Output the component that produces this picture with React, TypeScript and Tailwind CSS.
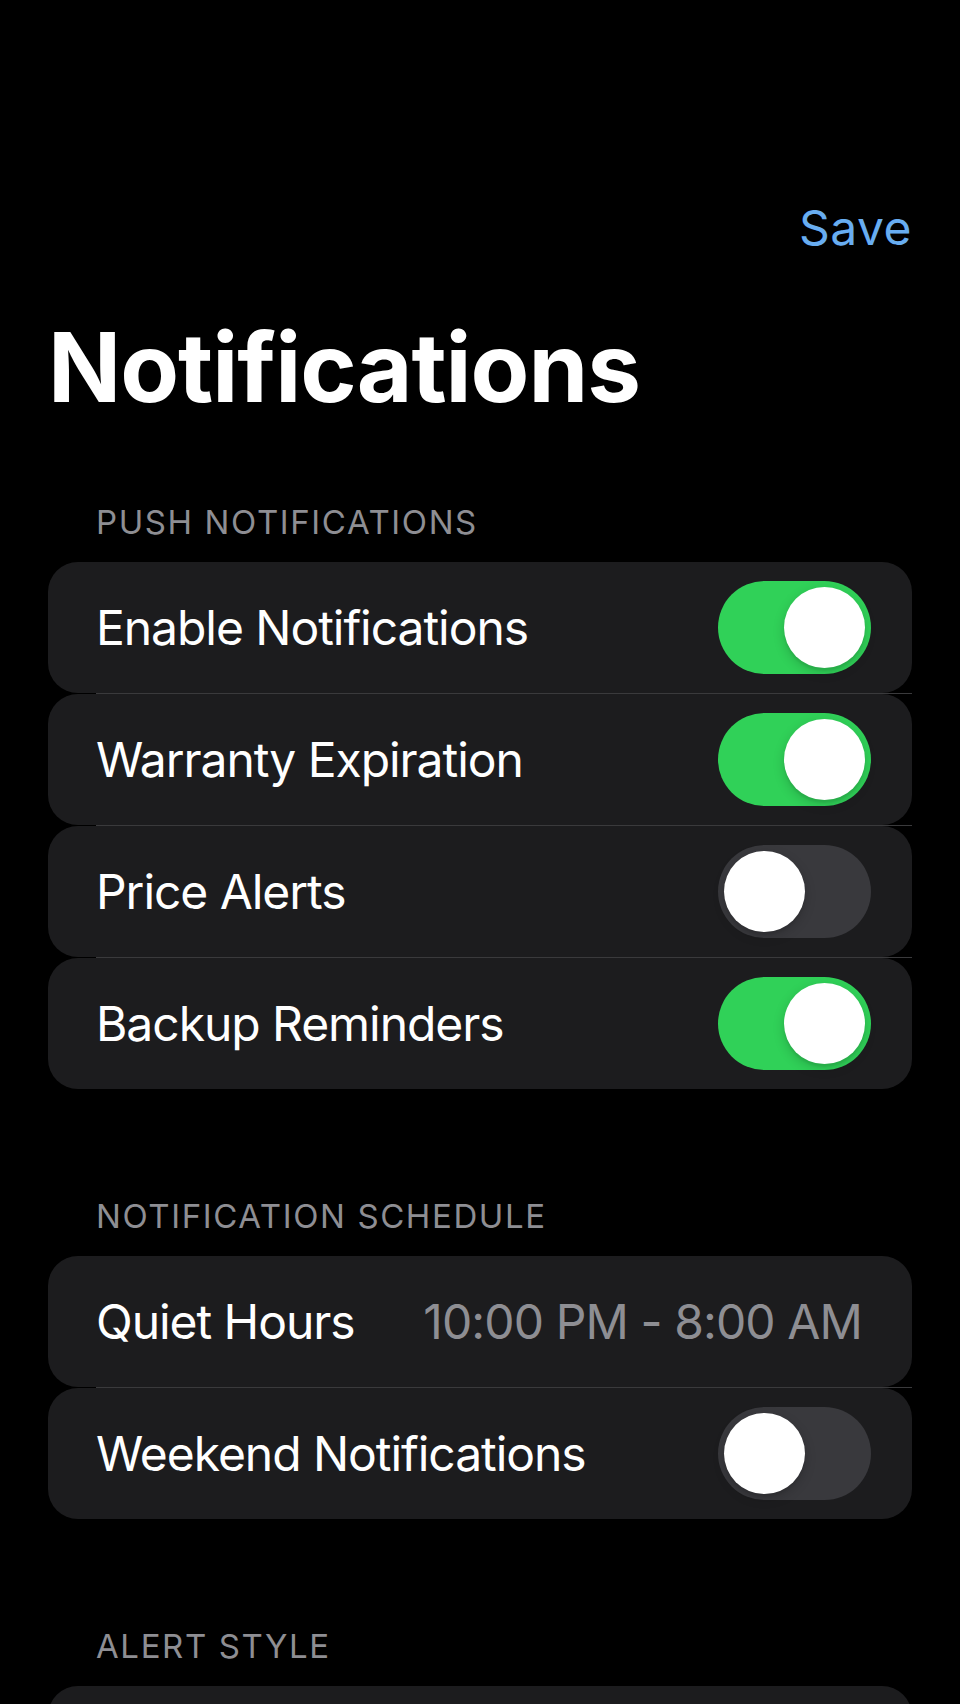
import React from "react";

function Toggle({ on }: { on: boolean }) {
  return (
    <div
      className={
        "relative h-[93px] w-[153px] shrink-0 rounded-full " +
        (on ? "bg-[#30d158]" : "bg-[#39393d]")
      }
    >
      <div
        className={
          "absolute top-[6px] h-[81px] w-[81px] rounded-full bg-white shadow-[0_4px_12px_rgba(0,0,0,0.18),0_3px_2px_rgba(0,0,0,0.06)] " +
          (on ? "right-[6px]" : "left-[6px]")
        }
      />
    </div>
  );
}

type Row = { label: string; toggle?: boolean; value?: string };

function Group({ rows }: { rows: Row[] }) {
  return (
    <div className="flex flex-col">
      {rows.map((r, i) => (
        <div key={r.label} className="flex flex-col">
          <div
            className={
              "flex h-[131px] items-center justify-between rounded-[30px] bg-[#1c1c1e] pl-[48px] " +
              (r.value !== undefined ? "pr-[50px]" : "pr-[41px]")
            }
          >
            <span className="text-[48px] leading-[58px] tracking-[-1.05px] text-white">
              {r.label}
            </span>
            {r.value !== undefined ? (
              <span className="text-[48px] leading-[58px] tracking-[-0.9px] text-[#8e8e93]">
                {r.value}
              </span>
            ) : (
              <Toggle on={!!r.toggle} />
            )}
          </div>
          {i < rows.length - 1 && <div className="ml-[48px] h-px bg-[#3a3a3c]" />}
        </div>
      ))}
    </div>
  );
}

function Header({ children }: { children: React.ReactNode }) {
  return (
    <div className="mb-[20px] pl-[48px] text-[33px] leading-[40px] tracking-[1.6px] text-[#8e8e93]">
      {children}
    </div>
  );
}

export default function App() {
  return (
    <div className="h-[1704px] w-[960px] overflow-hidden bg-black font-['Inter',sans-serif] antialiased">
      <div className="flex flex-col px-[48px]">
        <div className="flex justify-end pt-[200px]">
          <span className="text-[48px] leading-[56px] tracking-[0.5px] text-[#68adf1]">Save</span>
        </div>
        <h1 className="mt-[53px] text-[96px] font-bold leading-[116px] tracking-[-1px] text-white">
          Notifications
        </h1>

        <div className="mt-[77px]">
          <Header>PUSH NOTIFICATIONS</Header>
          <Group
            rows={[
              { label: "Enable Notifications", toggle: true },
              { label: "Warranty Expiration", toggle: true },
              { label: "Price Alerts", toggle: false },
              { label: "Backup Reminders", toggle: true },
            ]}
          />
        </div>

        <div className="mt-[107px]">
          <Header>NOTIFICATION SCHEDULE</Header>
          <Group
            rows={[
              { label: "Quiet Hours", value: "10:00 PM - 8:00 AM" },
              { label: "Weekend Notifications", toggle: false },
            ]}
          />
        </div>

        <div className="mt-[107px]">
          <Header>ALERT STYLE</Header>
          <div className="h-[131px] rounded-[30px] bg-[#1c1c1e]" />
        </div>
      </div>
    </div>
  );
}
